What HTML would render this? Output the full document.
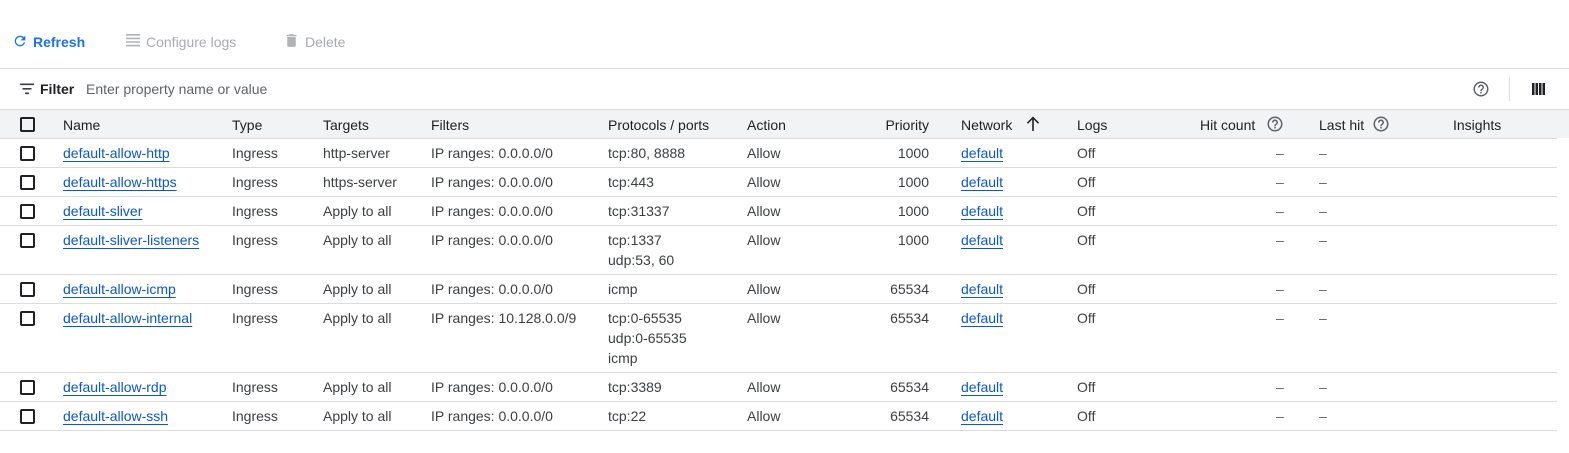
<!DOCTYPE html>
<html><head><meta charset="utf-8"><style>
*{margin:0;padding:0;box-sizing:border-box}
body{width:1569px;height:453px;background:#fff;font-family:"Liberation Sans",Arial,sans-serif;font-size:14px;color:#3c4043;position:relative;overflow:hidden}
.a{position:absolute;white-space:nowrap}
.hl{position:absolute;left:0;width:1557px;height:1px;background:#dadce0}
.cb{position:absolute;left:20px;width:15px;height:15px;border:2px solid #202124;border-radius:2px}
.lk{color:#0b57d0;text-decoration:underline;text-underline-offset:3px}
.h{color:#202124;font-weight:500}
.r{text-align:right}
</style></head><body>
<svg class="a" style="left:12px;top:33px" width="16" height="16" viewBox="0 0 24 24"><path fill="#1a73e8" d="M17.65 6.35A7.96 7.96 0 0 0 12 4a8 8 0 1 0 7.73 10h-2.08A6 6 0 1 1 12 6c1.66 0 3.14.69 4.22 1.78L13 11h7V4l-2.35 2.35z"/></svg>
<div class="a" style="left:33px;top:34px;color:#1a73e8;font-weight:bold">Refresh</div>
<svg class="a" style="left:126px;top:34px" width="14" height="13" viewBox="0 0 14 13"><path fill="#b0b3b8" d="M0 0h14v1.6H0zM0 3.6h14v1.6H0zM0 7.2h14v1.6H0zM0 10.8h14v1.6H0z"/></svg>
<div class="a" style="left:146px;top:34px;color:#a8abb0">Configure logs</div>
<svg class="a" style="left:283px;top:32px" width="17" height="17" viewBox="0 0 24 24"><path fill="#b0b3b8" d="M6 19c0 1.1.9 2 2 2h8c1.1 0 2-.9 2-2V7H6v12zM19 4h-3.5l-1-1h-5l-1 1H5v2h14V4z"/></svg>
<div class="a" style="left:305px;top:34px;color:#a8abb0">Delete</div>
<div class="hl" style="top:68px;width:1569px"></div>
<svg class="a" style="left:20px;top:83px" width="14" height="12" viewBox="0 0 14 12"><path fill="#3c4043" d="M0 0.5h14v1.6H0zM2.5 5h9v1.6h-9zM5 9.5h4v1.6H5z"/></svg>
<div class="a" style="left:40px;top:81px;color:#202124;font-weight:bold">Filter</div>
<div class="a" style="left:86px;top:81px;color:#5f6368">Enter property name or value</div>
<svg class="a" style="left:1472px;top:80px" width="18" height="18" viewBox="0 0 24 24"><path fill="#5f6368" d="M11 18h2v-2h-2v2zm1-16C6.48 2 2 6.48 2 12s4.48 10 10 10 10-4.48 10-10S17.52 2 12 2zm0 18c-4.41 0-8-3.59-8-8s3.59-8 8-8 8 3.59 8 8-3.59 8-8 8zm0-14c-2.21 0-4 1.79-4 4h2c0-1.1.9-2 2-2s2 .9 2 2c0 2-3 1.75-3 5h2c0-2.25 3-2.5 3-5 0-2.21-1.79-4-4-4z"/></svg>
<div class="a" style="left:1509px;top:77px;width:1px;height:24px;background:#dadce0"></div>
<svg class="a" style="left:1532px;top:83px" width="13" height="12" viewBox="0 0 13 12"><path fill="#202124" d="M0 0h2.5v12H0zM3.5 0h2.5v12H3.5zM7 0h2.5v12H7zM10.5 0h2.5v12h-2.5z"/></svg>
<div class="a" style="left:0;top:109px;width:1569px;height:29px;background:#f1f3f4;border-top:1px solid #dadce0"></div>
<div class="hl" style="top:138px"></div>
<div class="cb" style="top:117px"></div>
<div class="a h" style="left:63px;top:117px">Name</div>
<div class="a h" style="left:232px;top:117px">Type</div>
<div class="a h" style="left:323px;top:117px">Targets</div>
<div class="a h" style="left:431px;top:117px">Filters</div>
<div class="a h" style="left:608px;top:117px">Protocols / ports</div>
<div class="a h" style="left:747px;top:117px">Action</div>
<div class="a h r" style="left:829px;width:100px;top:117px">Priority</div>
<div class="a h" style="left:961px;top:117px">Network</div>
<svg class="a" style="left:1026px;top:116px" width="14" height="16" viewBox="0 0 14 16"><path fill="#202124" d="M6.2 15V3.5L2 7.7.9 6.6 7 .5l6.1 6.1-1.1 1.1-4.2-4.2V15z"/></svg>
<div class="a h" style="left:1077px;top:117px">Logs</div>
<div class="a h" style="left:1200px;top:117px">Hit count</div>
<svg class="a" style="left:1266px;top:115px" width="18" height="18" viewBox="0 0 24 24"><path fill="#5f6368" d="M11 18h2v-2h-2v2zm1-16C6.48 2 2 6.48 2 12s4.48 10 10 10 10-4.48 10-10S17.52 2 12 2zm0 18c-4.41 0-8-3.59-8-8s3.59-8 8-8 8 3.59 8 8-3.59 8-8 8zm0-14c-2.21 0-4 1.79-4 4h2c0-1.1.9-2 2-2s2 .9 2 2c0 2-3 1.75-3 5h2c0-2.25 3-2.5 3-5 0-2.21-1.79-4-4-4z"/></svg>
<div class="a h" style="left:1319px;top:117px">Last hit</div>
<svg class="a" style="left:1372px;top:115px" width="18" height="18" viewBox="0 0 24 24"><path fill="#5f6368" d="M11 18h2v-2h-2v2zm1-16C6.48 2 2 6.48 2 12s4.48 10 10 10 10-4.48 10-10S17.52 2 12 2zm0 18c-4.41 0-8-3.59-8-8s3.59-8 8-8 8 3.59 8 8-3.59 8-8 8zm0-14c-2.21 0-4 1.79-4 4h2c0-1.1.9-2 2-2s2 .9 2 2c0 2-3 1.75-3 5h2c0-2.25 3-2.5 3-5 0-2.21-1.79-4-4-4z"/></svg>
<div class="a h" style="left:1453px;top:117px">Insights</div>
<div id="rows"></div>
<script>
var rows=[
[138,29,"default-allow-http","http-server","0.0.0.0/0",["tcp:80, 8888"],"1000"],
[167,29,"default-allow-https","https-server","0.0.0.0/0",["tcp:443"],"1000"],
[196,29,"default-sliver","Apply to all","0.0.0.0/0",["tcp:31337"],"1000"],
[225,49,"default-sliver-listeners","Apply to all","0.0.0.0/0",["tcp:1337","udp:53, 60"],"1000"],
[274,29,"default-allow-icmp","Apply to all","0.0.0.0/0",["icmp"],"65534"],
[303,69,"default-allow-internal","Apply to all","10.128.0.0/9",["tcp:0-65535","udp:0-65535","icmp"],"65534"],
[372,29,"default-allow-rdp","Apply to all","0.0.0.0/0",["tcp:3389"],"65534"],
[401,29,"default-allow-ssh","Apply to all","0.0.0.0/0",["tcp:22"],"65534"]];
var h="";
rows.forEach(function(r){var t=r[0]+7;
h+='<div class="cb" style="top:'+(r[0]+8)+'px"></div>';
h+='<div class="a lk" style="left:63px;top:'+t+'px">'+r[2]+'</div>';
h+='<div class="a" style="left:232px;top:'+t+'px">Ingress</div>';
h+='<div class="a" style="left:323px;top:'+t+'px">'+r[3]+'</div>';
h+='<div class="a" style="left:431px;top:'+t+'px">IP ranges: '+r[4]+'</div>';
h+='<div class="a" style="left:608px;top:'+t+'px;line-height:20px;margin-top:-2px">'+r[5].join('<br>')+'</div>';
h+='<div class="a" style="left:747px;top:'+t+'px">Allow</div>';
h+='<div class="a r" style="left:829px;width:100px;top:'+t+'px">'+r[6]+'</div>';
h+='<div class="a lk" style="left:961px;top:'+t+'px">default</div>';
h+='<div class="a" style="left:1077px;top:'+t+'px">Off</div>';
h+='<div class="a" style="left:1276px;top:'+t+'px;color:#5f6368">–</div>';
h+='<div class="a" style="left:1319px;top:'+t+'px;color:#5f6368">–</div>';
h+='<div class="hl" style="top:'+(r[0]+r[1])+'px"></div>';
});
document.getElementById("rows").outerHTML=h;
</script>
</body></html>
